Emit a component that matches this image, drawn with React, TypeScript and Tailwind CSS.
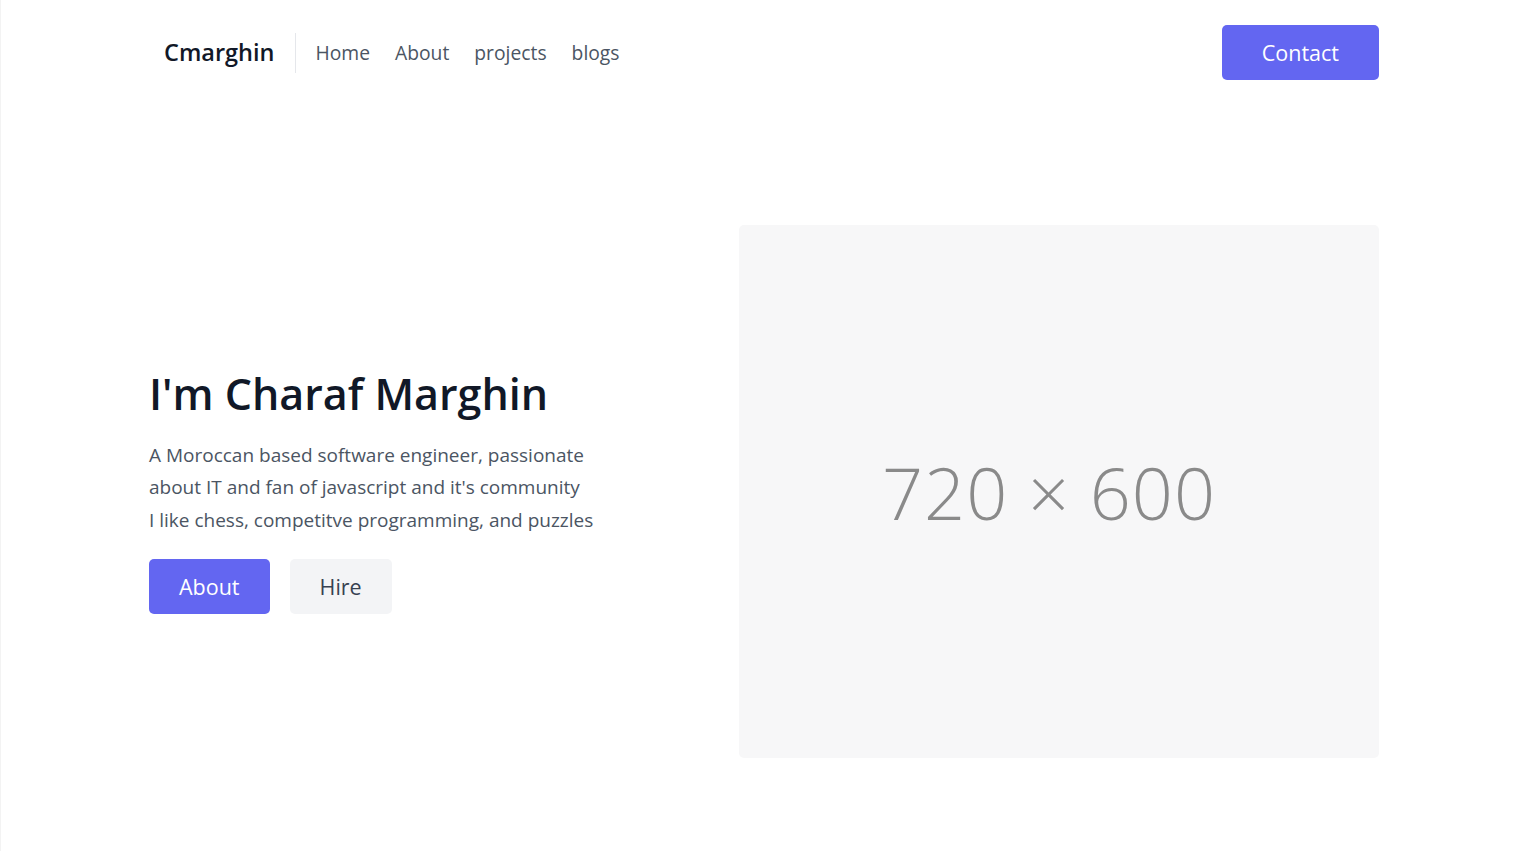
import React from "react";

const navLinks = ["Home", "About", "projects", "blogs"];

function Header() {
    return (
        <header className="text-gray-600">
            <div className="mx-auto flex max-w-[1280px] items-center p-[25px]">
                <a className="ml-[15px] text-[23.5px] font-semibold leading-[35px] text-[#111827]">Cmarghin</a>
                <nav className="ml-5 mr-auto flex items-center border-l border-[#e5e7eb] py-[5px] pl-5 text-[19.3px] leading-[30px] text-[#4b5563]">
                    {navLinks.map((link) => (
                        <a key={link} className="mr-[25px]">
                            {link}
                        </a>
                    ))}
                </nav>
                <button className="inline-flex items-center rounded-[5px] bg-[#6366f1] px-[40px] py-[10px] text-[21.5px] leading-[35px] text-white">
                    Contact
                </button>
            </div>
        </header>
    );
}

function Hero() {
    return (
        <section className="text-gray-600">
            <div className="mx-auto flex max-w-[1280px] items-center px-[25px] py-[120px]">
                {/* Texte */}
                <div className="flex grow flex-col items-start pr-[120px] text-left">
                    <h1 className="mb-5 text-[43px] font-semibold leading-[50px] text-[#111827]">I'm Charaf Marghin</h1>
                    <p className="mb-[23px] whitespace-nowrap text-[19px] leading-[32.5px] text-[#4b5563]">
                        A Moroccan based software engineer, passionate
                        <br />
                        about IT and fan of javascript and it's community
                        <br />
                        I like chess, competitve programming, and puzzles
                    </p>
                    <div className="flex">
                        <button className="inline-flex rounded-[5px] bg-[#6366f1] px-[30px] py-[10px] text-[21.5px] leading-[35px] text-white">
                            About
                        </button>
                        <button className="ml-5 inline-flex rounded-[5px] bg-[#f3f4f6] px-[30px] py-[10px] text-[21.5px] leading-[35px] text-[#374151]">
                            Hire
                        </button>
                    </div>
                </div>
                {/* Imagen placeholder */}
                <div className="flex h-[533px] w-[640px] shrink-0 items-center justify-center rounded-[5px] bg-[#f7f7f8] pr-5">
                    <span className="text-[72px] font-light tracking-[1px] text-[#8a8a8a]">720 × 600</span>
                </div>
            </div>
        </section>
    );
}

export default function App() {
    return (
        <div className="min-h-[851px] border-l border-[#f3f3f3] bg-white font-['Open_Sans','Noto_Sans',sans-serif]">
            <Header />
            <Hero />
        </div>
    );
}
